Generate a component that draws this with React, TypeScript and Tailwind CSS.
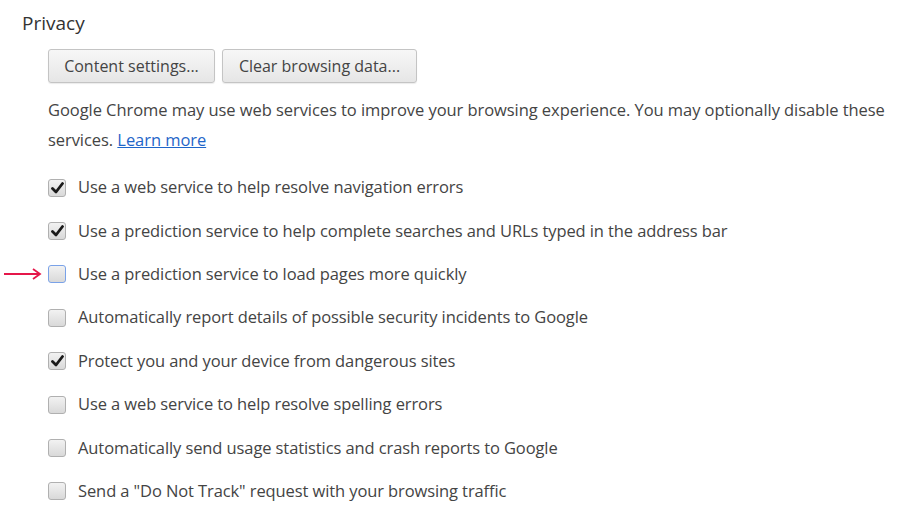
import React from "react";

const options = [
  { label: "Use a web service to help resolve navigation errors", checked: true },
  { label: "Use a prediction service to help complete searches and URLs typed in the address bar", checked: true },
  { label: "Use a prediction service to load pages more quickly", checked: false, focused: true },
  { label: "Automatically report details of possible security incidents to Google", checked: false },
  { label: "Protect you and your device from dangerous sites", checked: true },
  { label: "Use a web service to help resolve spelling errors", checked: false },
  { label: "Automatically send usage statistics and crash reports to Google", checked: false },
  { label: "Send a \"Do Not Track\" request with your browsing traffic", checked: false },
];

const Checkbox = ({ checked, focused }: { checked: boolean; focused?: boolean }) => (
  <div
    className={`w-[18px] h-[18px] rounded-[3px] border flex items-center justify-center bg-gradient-to-b from-[#f2f2f2] to-[#d9d9d9] ${
      focused ? "border-[#7aa2e8]" : "border-[#b0b0b0]"
    }`}
  >
    {checked && (
      <svg width="13" height="12" viewBox="0 0 13 12">
        <path d="M1.5 6.5 L5 10 L11.5 1.5" fill="none" stroke="#1a1a1a" strokeWidth="2.8" strokeLinecap="round" strokeLinejoin="round" />
      </svg>
    )}
  </div>
);

const Button = ({ children, className }: any) => (
  <button
    className={`h-[34px] rounded-[3px] border border-[#c4c4c4] bg-gradient-to-b from-[#f7f7f7] to-[#e6e6e6] text-[#444] text-[16px] shadow-[0_1px_1px_rgba(0,0,0,0.08)] ${className}`}
  >
    {children}
  </button>
);

export default function App() {
  return (
    <div className="w-[900px] h-[524px] bg-white text-[#444] overflow-hidden" style={{ fontFamily: '"Open Sans", "Noto Sans", sans-serif' }}>
      <div className="pl-[22px] pt-[9px]">
        <h1 className="text-[19px] leading-[28px] text-[#333]">Privacy</h1>
        <div className="pl-[26px] pt-[12px]">
          <div className="flex gap-[7px]">
            <Button className="w-[167px]">Content settings...</Button>
            <Button className="w-[195px]">Clear browsing data...</Button>
          </div>
          <p className="mt-[12px] text-[16.5px] leading-[30px] tracking-[-0.06px] whitespace-nowrap">
            Google Chrome may use web services to improve your browsing experience. You may optionally disable these
            <br />
            services. <a className="text-[#1f66c9] underline">Learn more</a>
          </p>
          <div className="mt-[11px] flex flex-col">
            {options.map((o, i) => (
              <div key={i} className="relative flex items-center gap-[12px] h-[43.4px]">
                {o.focused && (
                  <svg className="absolute left-[-44px] top-1/2 -translate-y-1/2" width="38" height="12" viewBox="0 0 38 12">
                    <path d="M0 6 H35" stroke="#e5174a" strokeWidth="1.8" />
                    <path d="M29 1 L36 6 L29 11" fill="none" stroke="#e5174a" strokeWidth="1.8" />
                  </svg>
                )}
                <Checkbox checked={o.checked} focused={o.focused} />
                <span className="text-[16.5px] tracking-[-0.1px]">{o.label}</span>
              </div>
            ))}
          </div>
        </div>
      </div>
    </div>
  );
}
